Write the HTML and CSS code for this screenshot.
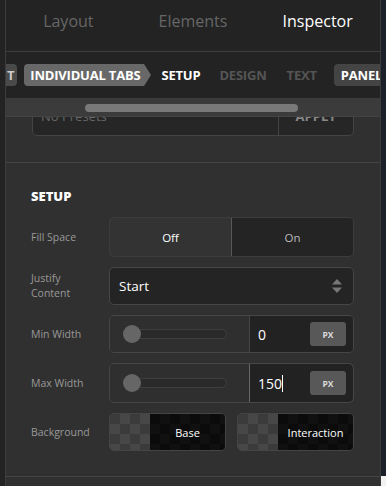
FILE: index.html
```html
<!DOCTYPE html>
<html lang="en">
<head>
	<meta charset="UTF-8">
	<title>Inspector</title>
	<link rel="stylesheet" href="styles.css">
</head>
<body>
	<div id="gutter"></div>
	<div id="panel">
		<div class="tabs">
			<div class="tab">Layout</div>
			<div class="tab">Elements</div>
			<div class="tab active">Inspector</div>
		</div>

		<div class="crumbs">
			<span class="pill first">T</span>
			<span class="pill arrow">INDIVIDUAL TABS</span>
			<span class="crumb current">SETUP</span>
			<span class="crumb">DESIGN</span>
			<span class="crumb last">TEXT</span>
			<span class="pill dark">PANEL</span>
		</div>
		<div class="scrollbar"><div class="thumb"></div></div>

		<div class="scroll">
			<div class="presets">
				<div class="preset-box">
					<div class="preset-name">No Presets</div>
					<div class="preset-apply">APPLY</div>
				</div>
			</div>

			<div class="section">
				<h3>SETUP</h3>
				<div class="rows">
					<div class="row h40">
						<div class="label">Fill Space</div>
						<div class="control toggle">
							<div class="seg on">Off</div>
							<div class="seg">On</div>
						</div>
					</div>
					<div class="row h38">
						<div class="label">Justify<br>Content</div>
						<div class="control select">
							<span>Start</span>
							<svg width="12" height="16" viewBox="0 0 12 16"><path d="M6 1 L11 6.5 H1 Z M6 15 L11 9.5 H1 Z" fill="#777"/></svg>
						</div>
					</div>
					<div class="row h38">
						<div class="label">Min Width</div>
						<div class="control range">
							<div class="slider"><div class="track"></div><div class="knob"></div></div>
							<div class="num"><span>0</span><button>PX</button></div>
						</div>
					</div>
					<div class="row h40">
						<div class="label">Max Width</div>
						<div class="control range">
							<div class="slider"><div class="track"></div><div class="knob"></div></div>
							<div class="num focus"><span>150<i class="caret"></i></span><button>PX</button></div>
						</div>
					</div>
					<div class="row h38">
						<div class="label">Background</div>
						<div class="swatches">
							<div class="swatch"><div class="checker"></div><div class="fill">Base</div></div>
							<div class="swatch"><div class="checker"></div><div class="fill">Interaction</div></div>
						</div>
					</div>
				</div>
			</div>
			<div class="next"></div>
		</div>
	</div>
	<div id="edge"><div class="corner"></div></div>
</body>
</html>
```

FILE: styles.css
```css
html, body {
	margin: 0;
	height: 100%;
}
body {
	display: flex;
	background-color: #303030;
	font-family: "Open Sans", "Noto Sans", sans-serif;
	color: #fff;
	overflow: hidden;
}
#gutter {
	width: 5px;
	background-color: #232323;
}
#edge {
	width: 5px;
	background-color: #1c2129;
	display: flex;
	flex-direction: column;
	justify-content: flex-end;
}
#edge .corner {
	height: 10px;
	background-color: #f2f2f2;
}
#panel {
	width: 374px;
	border-left: 1px solid #3c3c3c;
	border-right: 1px solid #3c3c3c;
	display: flex;
	flex-direction: column;
	background-color: #303030;
}

/* top tabs */
.tabs {
	display: flex;
	height: 51px;
	background-color: #232323;
	border-bottom: 1px solid #3e3e3e;
}
.tab {
	flex: 1;
	text-align: center;
	font-size: 16px;
	line-height: 42px;
	color: #666;
}
.tab.active { color: #fff; }

/* breadcrumbs */
.crumbs {
	height: 46px;
	background-color: #232323;
	display: flex;
	align-items: center;
	white-space: nowrap;
	overflow: hidden;
	font-size: 13px;
	letter-spacing: -0.2px;
	font-weight: bold;
}
.pill {
	height: 22px;
	line-height: 22px;
	padding: 0 4px 0 6px;
	border-radius: 4px;
	background-color: #686868;
	color: #fff;
	position: relative;
}
.pill.first {
	background-color: #4a4a4a;
	color: #ccc;
	padding: 0 3px 0 1px;
	border-radius: 0 4px 4px 0;
	margin-right: 7px;
}
.pill.arrow {
	border-radius: 4px 0 0 4px;
	margin-right: 17px;
}
.pill.arrow:after {
	content: "";
	position: absolute;
	right: -7px;
	top: 0;
	border-top: 11px solid transparent;
	border-bottom: 11px solid transparent;
	border-left: 7px solid #686868;
}
.pill.dark {
	background-color: #444;
	padding-left: 7px;
}
.crumb {
	color: #555;
	margin-right: 20px;
}
.crumb.current {
	color: #fff;
	margin-right: 19px;
}
.crumb.last { margin-right: 17px; }
.scrollbar {
	height: 19px;
	background-color: #3b3b3b;
	border-bottom: 1px solid #444;
	box-sizing: border-box;
	padding-top: 6px;
}
.thumb {
	margin-left: 79px;
	width: 213px;
	height: 8px;
	border-radius: 4px;
	background-color: #797979;
}

/* content */
.scroll {
	flex: 1;
	overflow: hidden;
}
.presets {
	padding: 0 26px 26px;
	border-bottom: 1px solid #444;
	overflow: hidden;
}
.preset-box {
	margin-top: -19px;
	height: 36px;
	display: flex;
	background-color: #262626;
	border: 1px solid #444;
	border-radius: 5px;
	font-size: 13px;
	line-height: 34px;
}
.preset-name {
	flex: 1;
	padding-left: 8px;
	color: #666;
	border-right: 1px solid #444;
}
.preset-apply {
	width: 74px;
	text-align: center;
	color: #888;
	font-weight: bold;
}

.section {
	padding: 24px 26px 25px 25px;
	border-bottom: 1px solid #444;
}
.section h3 {
	margin: 0 0 12px;
	font-size: 13px;
	line-height: 18px;
	font-weight: 800;
}
.rows {
	display: flex;
	flex-direction: column;
	gap: 10px;
}
.row {
	display: flex;
	align-items: center;
}
.row.h40 { height: 40px; }
.row.h38 { height: 38px; }
.label {
	width: 78px;
	font-size: 10.5px;
	line-height: 15px;
	color: #999;
}
.control {
	flex: 1;
	align-self: stretch;
	box-sizing: border-box;
	border: 1px solid #464646;
	border-radius: 5px;
	display: flex;
	overflow: hidden;
}

/* toggle */
.toggle {
	border-color: #3c3c3c;
	background-color: #242424;
}
.seg {
	flex: 1;
	display: flex;
	align-items: center;
	justify-content: center;
	font-size: 11.5px;
	color: #bbb;
}
.seg.on {
	background-color: #333;
	color: #fff;
	border: 1px solid #575757;
	border-radius: 5px 0 0 5px;
	margin: -1px 0 -1px -1px;
}

/* select */
.select {
	background-color: #242424;
	align-items: center;
	justify-content: space-between;
	padding: 0 10px 0 9px;
	font-size: 13.5px;
}

/* range + number */
.slider {
	width: 139px;
	background-color: #2f2f2f;
	display: flex;
	align-items: center;
	position: relative;
}
.track {
	margin-left: 15px;
	width: 100px;
	height: 8px;
	border-radius: 5px;
	background-color: #2a2a2a;
	border: 1px solid #3e3e3e;
}
.knob {
	position: absolute;
	left: 13px;
	top: 50%;
	margin-top: -9px;
	width: 18px;
	height: 18px;
	border-radius: 50%;
	background-color: #666;
}
.num {
	flex: 1;
	background-color: #222;
	border-left: 1px solid #464646;
	display: flex;
	align-items: center;
	justify-content: space-between;
	padding: 0 7px 0 8px;
	font-size: 14px;
}
.num.focus {
	border: 1px solid #666;
	margin: -1px -1px -1px 0;
	border-radius: 0 5px 5px 0;
}
.num button {
	width: 36px;
	height: 24px;
	border: 0;
	border-radius: 3px;
	background-color: #585858;
	color: #ddd;
	font-family: inherit;
	font-size: 8.5px;
	font-weight: bold;
	padding: 0;
}
.caret {
	display: inline-block;
	width: 1px;
	height: 17px;
	background-color: #fff;
	vertical-align: -3px;
}

/* background swatches */
.swatches {
	flex: 1;
	align-self: stretch;
	display: flex;
	gap: 11px;
}
.swatch {
	flex: 1;
	display: flex;
	border: 1px solid #444;
	border-radius: 5px;
	overflow: hidden;
}
.checker {
	width: 40px;
	background-color: #3b3b3b;
	background-image: linear-gradient(45deg, #474747 25%, transparent 25%, transparent 75%, #474747 75%),
	linear-gradient(45deg, #474747 25%, transparent 25%, transparent 75%, #474747 75%);
	background-size: 20px 20px;
	background-position: 0 0, 10px 10px;
}
.fill {
	flex: 1;
	display: flex;
	align-items: center;
	justify-content: center;
	font-size: 11px;
	background-color: #0b0b0b;
	background-image: linear-gradient(45deg, #101010 25%, transparent 25%, transparent 75%, #101010 75%),
	linear-gradient(45deg, #101010 25%, transparent 25%, transparent 75%, #101010 75%);
	background-size: 20px 20px;
	background-position: 0 0, 10px 10px;
}
```
